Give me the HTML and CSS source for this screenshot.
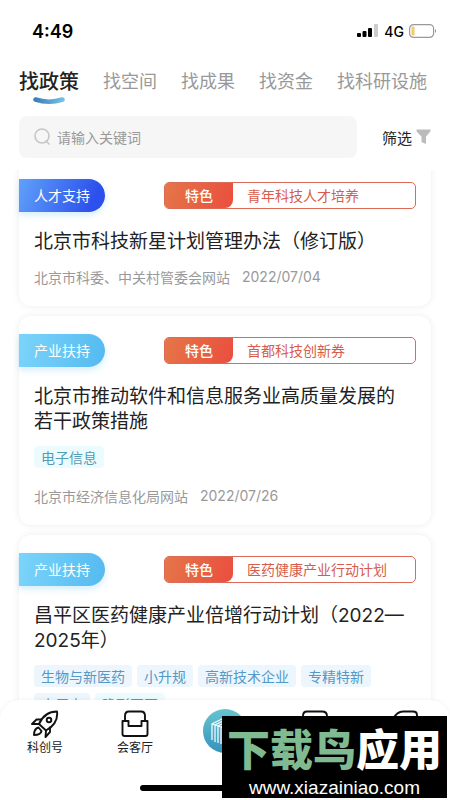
FILE: index.html
```html
<!DOCTYPE html>
<html lang="zh-CN">
<head>
<meta charset="utf-8">
<meta name="viewport" content="width=device-width, initial-scale=1">
<title>找政策</title>
<link rel="stylesheet" href="styles.css">
</head>
<body>
<header class="top">
  <div class="status">
    <span class="clock">4:49</span>
    <div class="signals">
      <svg width="22" height="14" viewBox="0 0 22 14"><rect x="0" y="9" width="4" height="4" rx="1"/><rect x="5.500" y="7" width="4" height="6" rx="1"/><rect x="11" y="4" width="4" height="9" rx="1"/><rect x="17" y="0" width="4" height="13" rx="1" fill="#ccc"/></svg>
      <span class="network">4G</span>
      <svg width="28" height="14" viewBox="0 0 28 14"><rect x=".6" y=".6" width="24" height="12.800" rx="4" fill="#fff" stroke="#999" stroke-width="1.200"/><rect x="2.500" y="2.500" width="3" height="9" rx="1" fill="#efce68"/><path d="M26 5q2 2 0 4z" fill="#888"/></svg>
    </div>
  </div>
  <nav class="tabs">
    <a class="tab active" href="#policy">找政策
      <svg class="swoosh" width="32" height="8" viewBox="0 0 32 8"><defs><linearGradient id="sw"><stop offset="0" stop-color="#3c7fbd"/><stop offset="1" stop-color="#73bfe3"/></linearGradient></defs><path d="M2.500 2.500Q16 7 29.500 2.500" fill="none" stroke="url(#sw)" stroke-width="4.500" stroke-linecap="round"/></svg>
    </a>
    <a class="tab" href="#space">找空间</a>
    <a class="tab" href="#result">找成果</a>
    <a class="tab" href="#fund">找资金</a>
    <a class="tab" href="#facility">找科研设施</a>
  </nav>
  <form class="search-row">
    <label class="search">
      <svg width="16" height="18" viewBox="0 0 16 18" fill="none" stroke="#c6c6c6" stroke-width="1.600" stroke-linecap="round"><circle cx="8" cy="8" r="7"/><path d="M12 13l3 3"/></svg>
      <input type="search" placeholder="请输入关键词" aria-label="请输入关键词">
    </label>
    <button class="filter" type="button">筛选
      <svg width="15" height="16" viewBox="0 0 15 16"><path d="M.5.5h14q.5 1.500-1 3L10 7.500V15l-4.500-2V7.500L1.500 3.500Q0 2 .5.5z" fill="#bbb"/></svg>
    </button>
  </form>
</header>

<main class="list">
  <article class="card">
    <div class="card-head">
      <span class="badge talent">人才支持</span>
      <div class="feature"><span class="feature-label">特色</span><span class="feature-text">青年科技人才培养</span></div>
    </div>
    <h2 class="title">北京市科技新星计划管理办法（修订版）</h2>
    <div class="meta"><span>北京市科委、中关村管委会网站</span><time>2022/07/04</time></div>
  </article>

  <article class="card">
    <div class="card-head">
      <span class="badge">产业扶持</span>
      <div class="feature"><span class="feature-label">特色</span><span class="feature-text">首都科技创新券</span></div>
    </div>
    <h2 class="title">北京市推动软件和信息服务业高质量发展的若干政策措施</h2>
    <div class="tags"><span class="tag cyan">电子信息</span></div>
    <div class="meta"><span>北京市经济信息化局网站</span><time>2022/07/26</time></div>
  </article>

  <article class="card">
    <div class="card-head">
      <span class="badge">产业扶持</span>
      <div class="feature"><span class="feature-label">特色</span><span class="feature-text">医药健康产业行动计划</span></div>
    </div>
    <h2 class="title">昌平区医药健康产业倍增行动计划（2022—2025年）</h2>
    <div class="tags">
      <span class="tag">生物与新医药</span><span class="tag">小升规</span><span class="tag">高新技术企业</span><span class="tag">专精特新</span><span class="tag">小巨人</span><span class="tag cyan">隐形冠军</span>
    </div>
  </article>
</main>

<footer class="bottom">
  <nav class="tabbar">
    <a class="item" href="#news">
      <svg width="28" height="28" viewBox="0 0 28 28" fill="none" stroke="#111" stroke-width="1.900" stroke-linejoin="round" stroke-linecap="round"><path d="M8 14C12 5 18 1.500 26 1.500C27 9 23 16 15 20.500z"/><circle cx="18" cy="10" r="2.300"/><path d="M10 9.500L5.500 9.500L1 14L8 14M19 17.500L19 22L14.500 27L15 20.500M7.500 17.500C4 18.500 3 21 3 25C7 25 10 24 10.500 21z"/></svg>
      <span>科创号</span>
    </a>
    <a class="item" href="#lounge">
      <svg width="28" height="28" viewBox="0 0 28 28" fill="none" stroke="#111" stroke-width="1.900" stroke-linejoin="round" stroke-linecap="round"><path d="M4 11V6Q4 1.500 8 1.500H20Q24 1.500 24 6V11M1.500 11H7.500V16H20.500V11H26.500V24Q26.500 26 24.500 26H3.500Q1.500 26 1.500 24z"/></svg>
      <span>会客厅</span>
    </a>
    <a class="item home" href="#home" aria-label="首页">
      <svg width="44" height="44" viewBox="0 0 44 44"><defs><linearGradient id="lg" x2="0" y2="1"><stop offset="0" stop-color="#66c5cf"/><stop offset="1" stop-color="#3592bd"/></linearGradient></defs><circle cx="22" cy="22" r="22" fill="url(#lg)"/><g fill="none" stroke="#eefaff" stroke-width="1.300"><path d="M9 31V15L21 9M12 33V16L24 10M15 34V17L27 11M18 35V18L30 12M21 36V19L33 13M24 37V20L36 14V31L24 37M9 15L24 20M21 9L36 14"/></g></svg>
    </a>
    <a class="item" href="#service" aria-label="服务">
      <svg width="28" height="28" viewBox="0 0 28 28" fill="none" stroke="#111" stroke-width="1.900"><path d="M2 9V6Q2 1.500 6 1.500H21Q26 1.500 26 6V9"/></svg>
    </a>
    <a class="item" href="#mine" aria-label="我的">
      <svg width="28" height="28" viewBox="0 0 28 28" fill="none" stroke="#111" stroke-width="1.900"><path d="M2 9Q6 1.500 12 1.500H22Q26 1.500 26 5V9"/></svg>
    </a>
  </nav>
  <div class="home-bar"></div>
</footer>

<aside class="watermark">
  <div class="brand"><span class="green">下载鸟</span>应用</div>
  <div class="site">www.xiazainiao.com</div>
</aside>
</body>
</html>
```
FILE: styles.css
```css
* {
  box-sizing: border-box;
}

body {
  position: relative;
  display: flex;
  flex-direction: column;
  height: 100vh;
  margin: 0;
  overflow: hidden;
  background: #fff;
  color: #222;
  font-family: "Noto Sans CJK SC", sans-serif;
  font-size: 14px;
}

a {
  color: inherit;
  text-decoration: none;
}

svg {
  display: block;
  flex: none;
}

.top {
  flex: none;
  padding: 0 13px 12px 19px;
}

/* Status bar */
.status {
  display: flex;
  align-items: center;
  justify-content: space-between;
  height: 62px;
  padding-left: 13px;
  color: #000;
  font-family: Inter, sans-serif;
}

.clock {
  font-size: 18px;
  font-weight: 600;
}

.signals {
  display: flex;
  align-items: center;
  gap: 5px;
}

.network {
  font-size: 14px;
  font-weight: 500;
}

/* Category tabs */
.tabs {
  display: flex;
  align-items: center;
  gap: 24px;
  height: 36px;
  color: #999;
  font-size: 18px;
  white-space: nowrap;
}

.tab.active {
  position: relative;
  color: #222;
  font-size: 20px;
  font-weight: 500;
}

.swoosh {
  position: absolute;
  left: 14px;
  bottom: -10px;
}

/* Search */
.search-row {
  display: flex;
  align-items: center;
  gap: 25px;
  margin-top: 18px;
  padding-right: 6px;
}

.search {
  display: flex;
  flex: 1;
  align-items: center;
  gap: 7px;
  min-width: 0;
  height: 42px;
  padding: 0 15px;
  border-radius: 8px;
  background: #f6f6f6;
}

.search input {
  flex: 1;
  min-width: 0;
  padding: 0;
  border: 0;
  outline: 0;
  background: none;
  font: inherit;
}

.search input::placeholder {
  color: #999;
}

.filter {
  display: flex;
  align-items: center;
  gap: 4px;
  padding: 0;
  border: 0;
  background: none;
  color: #222;
  font: inherit;
  font-size: 15px;
}

/* Policy list, scrolled slightly past its start */
.list {
  display: flex;
  flex: 1;
  flex-direction: column;
  gap: 10px;
  min-height: 0;
  margin-bottom: -20px;
  padding: 0 19px;
  overflow: hidden;
}

.card {
  flex: none;
  padding: 18px 15px 19px;
  border-radius: 12px;
  background: #fff;
  box-shadow: 0 0 7px rgba(0, 0, 0, 0.08);
}

.card:first-child {
  margin-top: -9px;
}

.card-head {
  display: flex;
  align-items: center;
  justify-content: space-between;
  gap: 12px;
}

.badge {
  margin-left: -15px;
  padding: 0 15px;
  border-radius: 0 17px 17px 0;
  background: linear-gradient(100deg, #7bd4fa, #55baf0);
  box-shadow: 0 3px 6px rgba(85, 186, 240, 0.25);
  color: #fff;
  line-height: 33px;
  white-space: nowrap;
}

.badge.talent {
  background: linear-gradient(110deg, #60a1f9, #2c50ec 85%);
}

.feature {
  display: flex;
  flex: 0 1 252px;
  overflow: hidden;
  border: 1px solid #dc6a59;
  border-radius: 5px;
  color: #d85c4b;
  line-height: 25px;
}

.feature-label {
  flex: none;
  width: 68px;
  border-radius: 0 0 8px 0;
  background: linear-gradient(110deg, #e57649, #ea4e3e);
  color: #fff;
  font-weight: 500;
  text-align: center;
}

.feature-text {
  padding-left: 14px;
  white-space: nowrap;
}

.title {
  margin: 17px 0 0;
  padding-right: 4px;
  font-family: Inter, "Noto Sans CJK SC", sans-serif;
  font-size: 19px;
  font-weight: 400;
  line-height: 25px;
}

.tags {
  display: flex;
  flex-wrap: wrap;
  gap: 6px 5px;
  margin-top: 12px;
}

.tag {
  padding: 0 7px;
  border-radius: 4px;
  background: #edf6fc;
  color: #5599c6;
  line-height: 22px;
}

.tag.cyan {
  background: #ecfbfe;
  color: #539cb4;
}

.meta {
  display: flex;
  gap: 12px;
  margin-top: 13px;
  color: #999;
  line-height: 20px;
}

.tags + .meta {
  margin-top: 18px;
}

.meta time {
  font-family: Inter, sans-serif;
}

/* Bottom navigation */
.bottom {
  position: relative;
  flex: none;
  padding: 9px 0;
  border-radius: 20px 20px 0 0;
  background: #fff;
  box-shadow: 0 0 5px rgba(0, 0, 0, 0.06);
}

.tabbar {
  display: grid;
  grid-template-columns: repeat(5, 1fr);
  height: 76px;
}

.item {
  display: flex;
  flex-direction: column;
  align-items: center;
  padding-top: 1px;
  font-size: 12px;
  line-height: 18px;
}

.item.home {
  padding-top: 0;
}

.home-bar {
  width: 38%;
  height: 6px;
  margin: 0 auto;
  border-radius: 3px;
  background: #000;
}

/* Site stamp over the lower right corner */
.watermark {
  position: absolute;
  right: 3px;
  bottom: 2px;
  padding: 0 5px;
  background: #000;
  color: #fff;
  text-align: center;
  white-space: nowrap;
}

.brand {
  font-size: 43px;
  font-weight: 900;
  line-height: 62px;
}

.green {
  color: #7fba91;
}

.site {
  font-family: "Liberation Sans", sans-serif;
  font-size: 19px;
  line-height: 20px;
}
```
